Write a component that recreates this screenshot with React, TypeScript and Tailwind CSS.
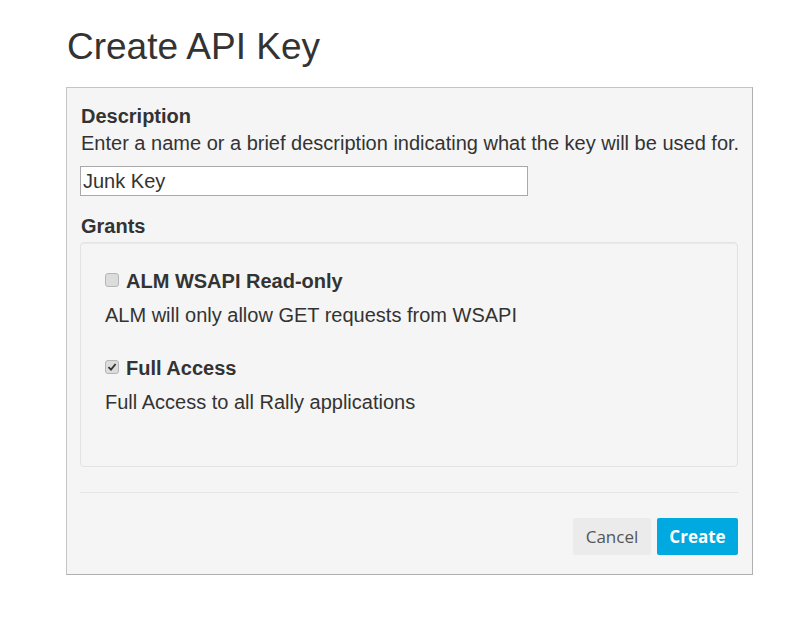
import React, { useState } from 'react'

const grants = [
  { id: 'wsapi', title: 'ALM WSAPI Read-only', desc: 'ALM will only allow GET requests from WSAPI' },
  { id: 'full', title: 'Full Access', desc: 'Full Access to all Rally applications' },
]

function Box({ checked, onClick }: { checked: boolean; onClick: () => void }) {
  return (
    <button
      onClick={onClick}
      className="w-[14px] h-[14px] mt-[5px] shrink-0 rounded-[3px] border border-[#b5b5b5] bg-[#dcdcdc] flex items-center justify-center"
    >
      {checked && (
        <svg width="10" height="10" viewBox="0 0 10 10">
          <path d="M1.5 5.2 L4 7.6 L8.6 2" fill="none" stroke="#333" strokeWidth="1.8" />
        </svg>
      )}
    </button>
  )
}

export default function App() {
  const [desc, setDesc] = useState('Junk Key')
  const [checked, setChecked] = useState<Record<string, boolean>>({ wsapi: false, full: true })

  return (
    <div className="min-h-screen bg-white text-[#333] font-['Liberation_Sans',Arial,sans-serif] pl-[66px] pt-[27px]">
      <h1 className="text-[37px] leading-[40px] mb-[20px] pl-px">Create API Key</h1>

      <div className="w-[687px] border border-[#c4c4c4] border-r-[#b0b0b0] border-b-[#b0b0b0] bg-[#f5f5f5] pl-[13px] pr-[14px] pt-[15px] pb-[19px]">
        <div className="text-[20px] leading-[27px] font-bold pl-px">Description</div>
        <div className="text-[20px] leading-[27px] pl-px whitespace-nowrap">
          Enter a name or a brief description indicating what the key will be used for.
        </div>
        <input
          value={desc}
          onChange={(e) => setDesc(e.target.value)}
          className="mt-[9px] block w-[448px] h-[30px] border border-[#a9a9a9] bg-white px-[2px] text-[20px] text-[#333] outline-none"
        />

        <div className="mt-[17px] text-[20px] leading-[27px] font-bold pl-px">Grants</div>

        {/* Grants well */}
        <div className="mt-[2px] h-[225px] rounded-[4px] border border-[#e3e3e3] bg-[#f5f5f5] shadow-[inset_0_1px_1px_rgba(0,0,0,0.05)] pl-[24px] pt-[25px]">
          {grants.map((g, i) => (
            <div key={g.id} className={i > 0 ? 'mt-[26px]' : ''}>
              <div className="flex gap-[7px] text-[20px] leading-[27px] font-bold">
                <Box
                  checked={!!checked[g.id]}
                  onClick={() => setChecked((c) => ({ ...c, [g.id]: !c[g.id] }))}
                />
                {g.title}
              </div>
              <div className="mt-[7px] text-[20px] leading-[27px]">{g.desc}</div>
            </div>
          ))}
        </div>

        <div className="mt-[25px] h-px bg-[#e6e6e6]" />

        <div className="mt-[25px] flex justify-end gap-[6px] font-['Open_Sans',sans-serif] text-[17px]">
          <button className="w-[78px] h-[37px] rounded-[2px] bg-[#ebebeb] text-[#555]">Cancel</button>
          <button className="w-[81px] h-[37px] rounded-[2px] bg-[#00a9e0] text-white font-bold">Create</button>
        </div>
      </div>
    </div>
  )
}
